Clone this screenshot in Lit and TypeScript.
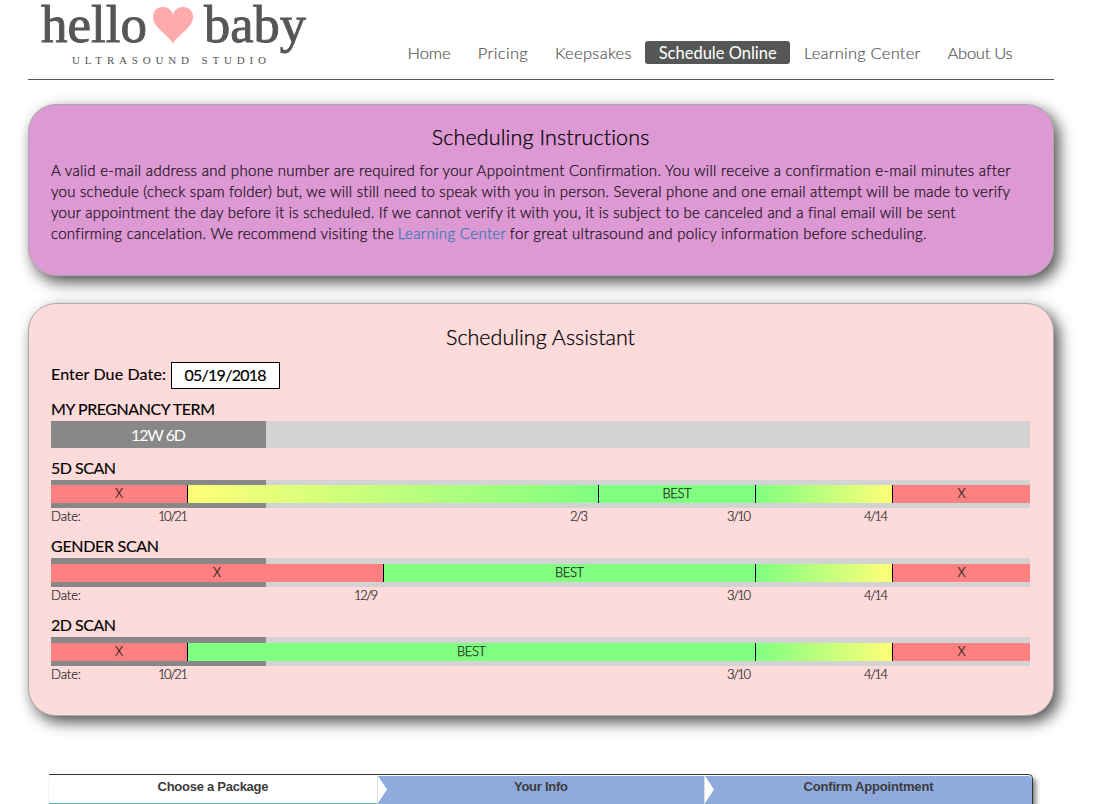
import { LitElement, html, css, svg } from "lit";
import { customElement, property } from "lit/decorators.js";
import { classMap } from "lit/directives/class-map.js";
import { styleMap } from "lit/directives/style-map.js";

/** One line of text whose tracking is adjusted so that it spans a given width. */
@customElement("fit-text")
class FitText extends LitElement {
  static styles = css`
    :host { display: inline-block; white-space: nowrap; vertical-align: baseline; }
    .run { display: inline-block; }
  `;
  @property({ type: String }) text = "";
  @property({ type: Number }) width = 0;

  firstUpdated() {
    const run = this.renderRoot.querySelector(".run") as HTMLElement;
    const natural = run.getBoundingClientRect().width;
    const gap = (this.width - natural) / Math.max(1, this.text.length - 1);
    run.style.letterSpacing = `${gap}px`;
    run.style.marginRight = `${-gap}px`;
  }

  render() {
    return html`<span class="run">${this.text}</span>`;
  }
}

const fit = (text: string, width: number) =>
  html`<fit-text .text=${text} .width=${width}></fit-text>`;

type Segment = { size: number; kind: string; label?: string; labelWidth?: number; date?: string; dateWidth?: number; inset?: number };

const closing: Segment[] = [
  { size: 137, kind: "fade", date: "4/14", dateWidth: 24, inset: 5 },
  { size: 137, kind: "no", label: "X", labelWidth: 8 },
];

const scans: { title: string; width: number; tall: boolean; segments: Segment[] }[] = [
  {
    title: "5D SCAN", width: 65, tall: false,
    segments: [
      { size: 137, kind: "no", label: "X", labelWidth: 8, date: "10/21", dateWidth: 30, inset: 0 },
      { size: 411, kind: "rise", date: "2/3", dateWidth: 18, inset: 11 },
      { size: 157, kind: "best", label: "BEST", labelWidth: 29, date: "3/10", dateWidth: 24, inset: 5 },
      ...closing,
    ],
  },
  {
    title: "GENDER SCAN", width: 108, tall: true,
    segments: [
      { size: 333, kind: "no", label: "X", labelWidth: 8, date: "12/9", dateWidth: 24, inset: 6 },
      { size: 372, kind: "best", label: "BEST", labelWidth: 29, date: "3/10", dateWidth: 24, inset: 5 },
      ...closing,
    ],
  },
  {
    title: "2D SCAN", width: 65, tall: true,
    segments: [
      { size: 137, kind: "no", label: "X", labelWidth: 8, date: "10/21", dateWidth: 30, inset: 0 },
      { size: 568, kind: "best", label: "BEST", labelWidth: 29, date: "3/10", dateWidth: 24, inset: 5 },
      ...closing,
    ],
  },
];

@customElement("app-root")
class AppRoot extends LitElement {
  static styles = css`
    :host { display: block; height: 804px; overflow: hidden; background: #fff; color: #000; font-family: Lato, sans-serif; }
    * { box-sizing: border-box; }
    .page { width: 1026px; margin-left: 28px; }
    header { height: 80px; border-bottom: 1px solid #555; display: flex; align-items: flex-start; }
    .logo { display: block; width: 290px; height: 72px; flex: none; overflow: visible; }
    .word { font-family: "Liberation Serif", serif; font-size: 52px; fill: #555756; stroke: #555756; stroke-width: .9px; }
    .sub { font-family: "Liberation Serif", serif; font-size: 11px; fill: #555; }
    nav { display: flex; margin: 41px 0 0 76px; color: #555756; font-size: 16.5px; line-height: 24px; font-weight: 300; -webkit-text-stroke: .2px #555756; }
    .link { height: 23px; padding: 0 13.6px; border-radius: 3px; }
    .link.active { background: #555756; color: #fff; font-weight: 400; -webkit-text-stroke: 0; }
    .card { border: 1px solid #aaa; border-radius: 28px; box-shadow: 5px 6px 15px rgba(0, 0, 0, .7); padding: 0 23px 0 22px; }
    .instructions { height: 172px; margin-top: 24px; background: #dd99d3; }
    .assistant { height: 413px; margin-top: 27px; background: #fddbda; }
    h2 { margin: 0; text-align: center; font-weight: 300; font-size: 21.5px; line-height: 30px; -webkit-text-stroke: .25px #000; }
    .instructions h2 { padding-top: 17px; }
    .assistant h2 { padding-top: 18px; }
    .copy { padding-top: 8px; font-size: 15px; line-height: 21px; color: #1a0f1a; font-weight: 300; -webkit-text-stroke: .25px currentColor; }
    .copy div { height: 21px; display: flex; gap: 4px; }
    .copy a { color: #337ab7; }
    .due { display: flex; height: 27px; margin-top: 10px; font-size: 16px; line-height: 24px; }
    .field { width: 109px; height: 27px; margin-left: 5px; background: #fff; border: 1px solid #000; text-align: center; -webkit-text-stroke: .2px #000; }
    .label { font-size: 16px; }
    .label, .due > fit-text { -webkit-text-stroke: .15px #000; }
    .term-label { margin-top: 10px; height: 22px; line-height: 19px; }
    .term { height: 27px; background: linear-gradient(90deg, #888 215px, #d3d3d3 215px); }
    .term div { width: 215px; text-align: center; color: #fff; font-size: 16px; line-height: 28px; }
    .scan { padding-top: 10px; height: 78px; }
    .scan.tall { height: 79px; }
    .scan .label { height: 22px; line-height: 19px; }
    .track { height: 28px; padding: 5px 0; background: linear-gradient(90deg, #888 215px, #d3d3d3 215px); display: flex; }
    .tall .track { height: 29px; padding-top: 6px; }
    .seg { height: 18px; border-right: 1px solid #000; text-align: center; font-size: 13px; line-height: 16px; color: #222; font-weight: 300; -webkit-text-stroke: .25px #222; }
    .seg:last-child { border-right: 0; }
    .no { background: #ff8080; }
    .best { background: #80ff80; }
    .rise { background: linear-gradient(90deg, #ffff78, #80ff80); }
    .fade { background: linear-gradient(90deg, #80ff80, #ffff78); }
    .dates { display: flex; height: 18px; font-size: 13px; line-height: 16px; color: #222; font-weight: 300; -webkit-text-stroke: .2px #222; }
    .date { display: flex; justify-content: flex-end; }
    .date:first-child { justify-content: space-between; }
    .steps { margin: 58px 0 0 21px; width: 984px; height: 30px; display: flex; border-top: 1px solid #333; border-right: 1px solid #333; border-radius: 0 5px 0 0; box-shadow: 3px 4px 5px rgba(0,0,0,.5); background: #fff; font: bold 13px/24px "Liberation Sans", Arial, sans-serif; color: #3c3c3c; text-align: center; }
    .step { flex: none; width: 328px; height: 29px; border-bottom: 1px solid #5fb3ab; }
    .step.blue { display: flex; border: 0; margin-top: 1px; height: 28px; background: #8faadc; border-left: 1px solid #ddd; line-height: 22px; }
    .step.blue.mid { width: 327px; }
    .step.last { width: 328px; border-radius: 0 4px 0 0; }
    .arrow { display: block; width: 9px; height: 27px; flex: none; }
    .step.blue span { flex: 1; padding-right: 9px; }
  `;

  private logo() {
    return html`<svg class="logo" viewBox="28 0 290 72">
      ${svg`
        <text class="word" x="41" y="42" textLength="106" lengthAdjust="spacingAndGlyphs">hello</text>
        <path fill="#ffaaab" d="M173 44 C170 36 153 28 153 17 C153 10 158 7 163 7 C168 7 172 10 173 15 C174 10 178 7 183 7 C188 7 193 10 193 17 C193 28 176 36 173 44Z"/>
        <text class="word" x="204" y="42" textLength="102" lengthAdjust="spacingAndGlyphs">baby</text>
        <text class="sub" x="72" y="64" textLength="194">ULTRASOUND STUDIO</text>`}
    </svg>`;
  }

  private scan(s: (typeof scans)[number]) {
    return html`<section class=${classMap({ scan: true, tall: s.tall })}>
      <div class="label">${fit(s.title, s.width)}</div>
      <div class="track">
        ${s.segments.map((g) => html`<div class="seg ${g.kind}" style=${styleMap({ width: `${g.size}px` })}>
          ${g.label ? fit(g.label, g.labelWidth!) : ""}</div>`)}
      </div>
      <div class="dates">
        ${s.segments.map((g, i) => html`<div class="date" style=${styleMap({ width: `${g.size}px`, paddingRight: `${g.inset ?? 0}px` })}>
          ${i === 0 ? fit("Date:", 30) : ""}${g.date ? fit(g.date, g.dateWidth!) : ""}</div>`)}
      </div>
    </section>`;
  }

  private arrow() {
    return html`<svg class="arrow" viewBox="0 0 9 27"><path fill="#fff" d="M0 0L9 13.5L0 27Z"/></svg>`;
  }

  render() {
    const links: [string, number][] = [
      ["Home", 43], ["Pricing", 50], ["Keepsakes", 76.5], ["Schedule Online", 118], ["Learning Center", 116.5], ["About Us", 65],
    ];
    return html`<div class="page">
      <header>
        ${this.logo()}
        <nav>${links.map(([t, w]) => html`<a class=${classMap({ link: true, active: t === "Schedule Online" })}>${fit(t, w)}</a>`)}</nav>
      </header>
      <section class="card instructions">
        <h2>${fit("Scheduling Instructions", 218)}</h2>
        <div class="copy">
          <div>${fit("A valid e-mail address and phone number are required for your Appointment Confirmation. You will receive a confirmation e-mail minutes after", 959)}</div>
          <div>${fit("you schedule (check spam folder) but, we will still need to speak with you in person. Several phone and one email attempt will be made to verify", 959)}</div>
          <div>${fit("your appointment the day before it is scheduled. If we cannot verify it with you, it is subject to be canceled and a final email will be sent", 904)}</div>
          <div>${fit("confirming cancelation. We recommend visiting the", 343)}<a>${fit("Learning Center", 108)}</a>${fit("for great ultrasound and policy information before scheduling.", 417)}</div>
        </div>
      </section>
      <section class="card assistant">
        <h2>${fit("Scheduling Assistant", 189)}</h2>
        <div class="due">${fit("Enter Due Date:", 115)}<div class="field">${fit("05/19/2018", 82)}</div></div>
        <div class="label term-label">${fit("MY PREGNANCY TERM", 164)}</div>
        <div class="term"><div>${fit("12W 6D", 55)}</div></div>
        ${scans.map((s) => this.scan(s))}
      </section>
      <div class="steps">
        <div class="step">${fit("Choose a Package", 111)}</div>
        <div class="step blue mid">${this.arrow()}<span>${fit("Your Info", 54)}</span></div>
        <div class="step blue last">${this.arrow()}<span>${fit("Confirm Appointment", 130)}</span></div>
      </div>
    </div>`;
  }
}
